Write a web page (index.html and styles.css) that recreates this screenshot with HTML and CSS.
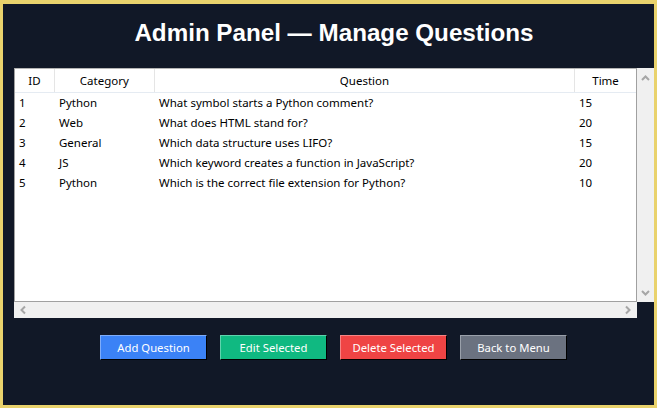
FILE: index.html
```html
<!DOCTYPE html>
<html>
<head>
<meta charset="utf-8">
<link rel="stylesheet" href="styles.css">
</head>
<body>
<div class="window">
  <h1 class="title">Admin Panel — Manage Questions</h1>
  <div class="table-wrap">
    <div class="tree">
      <div class="row head">
        <div class="c id">ID</div>
        <div class="c cat">Category</div>
        <div class="c q">Question</div>
        <div class="c t">Time</div>
      </div>
      <div class="row"><div class="c id">1</div><div class="c cat">Python</div><div class="c q">What symbol starts a Python comment?</div><div class="c t">15</div></div>
      <div class="row"><div class="c id">2</div><div class="c cat">Web</div><div class="c q">What does HTML stand for?</div><div class="c t">20</div></div>
      <div class="row"><div class="c id">3</div><div class="c cat">General</div><div class="c q">Which data structure uses LIFO?</div><div class="c t">15</div></div>
      <div class="row"><div class="c id">4</div><div class="c cat">JS</div><div class="c q">Which keyword creates a function in JavaScript?</div><div class="c t">20</div></div>
      <div class="row"><div class="c id">5</div><div class="c cat">Python</div><div class="c q">Which is the correct file extension for Python?</div><div class="c t">10</div></div>
    </div>
    <div class="vscroll">
      <svg class="arr" width="17" height="17" viewBox="0 0 17 17"><polyline points="5,11 8.5,7.5 12,11" fill="none" stroke="#a6a6a6" stroke-width="2"/></svg>
      <svg class="arr" width="17" height="17" viewBox="0 0 17 17"><polyline points="5,6 8.5,9.5 12,6" fill="none" stroke="#a6a6a6" stroke-width="2"/></svg>
    </div>
    <div class="hscroll">
      <svg class="arr" width="16" height="16" viewBox="0 0 16 16"><polyline points="10,4.5 6.5,8 10,11.5" fill="none" stroke="#a6a6a6" stroke-width="2"/></svg>
      <svg class="arr" width="16" height="16" viewBox="0 0 16 16"><polyline points="6,4.5 9.5,8 6,11.5" fill="none" stroke="#a6a6a6" stroke-width="2"/></svg>
    </div>
    <div class="corner"></div>
  </div>
  <div class="buttons">
    <div class="btn blue">Add Question</div>
    <div class="btn green">Edit Selected</div>
    <div class="btn red">Delete Selected</div>
    <div class="btn gray">Back to Menu</div>
  </div>
</div>
</body>
</html>
```

FILE: styles.css
```css
html, body {
  margin: 0;
  padding: 0;
}
body {
  width: 657px;
  height: 408px;
  overflow: hidden;
}
.window {
  box-sizing: border-box;
  width: 657px;
  height: 408px;
  border-style: solid;
  border-color: #e9d26c;
  border-width: 4px 3px 3px 3px;
  background: #111827;
  display: flex;
  flex-direction: column;
}
.title {
  margin: 0;
  padding: 17px 0 23px 11px;
  height: 24px;
  line-height: 24px;
  text-align: center;
  font-family: "Liberation Sans", Arial, sans-serif;
  font-weight: bold;
  font-size: 24.2px;
  color: #ffffff;
}
.table-wrap {
  margin-left: 11px;
  display: grid;
  grid-template-columns: 623px 17px;
  grid-template-rows: 234px 16px;
}
.tree {
  box-sizing: border-box;
  background: #ffffff;
  border: 1px solid #a0a0a0;
  border-top-color: #b4b4b4;
  font-family: "Noto Sans", "Open Sans", sans-serif;
  font-size: 11.5px;
  color: #000000;
  overflow: hidden;
}
.row {
  display: flex;
  height: 20px;
  line-height: 20px;
}
.row.head {
  height: 23px;
  line-height: 23px;
  border-bottom: 1px solid #e5ebf2;
  background: #ffffff;
}
.c {
  box-sizing: border-box;
  white-space: nowrap;
  overflow: hidden;
  padding-left: 4px;
}
.head .c {
  text-align: center;
  padding-left: 0;
  border-right: 1px solid #e5e5e5;
}
.head .c.t {
  border-right: none;
}
.id { width: 39px; }
.cat { width: 100px; padding-left: 5px; }
.q { width: 421px; padding-left: 5px; }
.t { width: 61px; }
.head .id { width: 40px; }
.vscroll {
  background: #f0f0f0;
  display: flex;
  flex-direction: column;
  justify-content: space-between;
  padding: 1px 0 0 0;
}
.hscroll {
  background: #f0f0f0;
  display: flex;
  justify-content: space-between;
  align-items: center;
  padding: 0 1px 0 1px;
}
.arr {
  display: block;
}
.corner {
  background: transparent;
}
.buttons {
  display: flex;
  gap: 13px;
  padding-left: 97px;
  margin-top: 17px;
}
.btn {
  box-sizing: border-box;
  width: 107px;
  height: 25px;
  line-height: 23px;
  text-align: center;
  font-family: "Noto Sans", "Open Sans", sans-serif;
  font-size: 11.3px;
  color: #ffffff;
  border-style: solid;
  border-width: 1px;
  border-right-color: #000000;
  border-bottom-color: #000000;
}
.blue { background: #3b82f6; border-top-color: #7fadf9; border-left-color: #7fadf9; }
.green { background: #10b981; border-top-color: #5fd3ad; border-left-color: #5fd3ad; }
.red { background: #ef4444; border-top-color: #f58585; border-left-color: #f58585; }
.gray { background: #6b7280; border-top-color: #9aa0aa; border-left-color: #9aa0aa; }
```
